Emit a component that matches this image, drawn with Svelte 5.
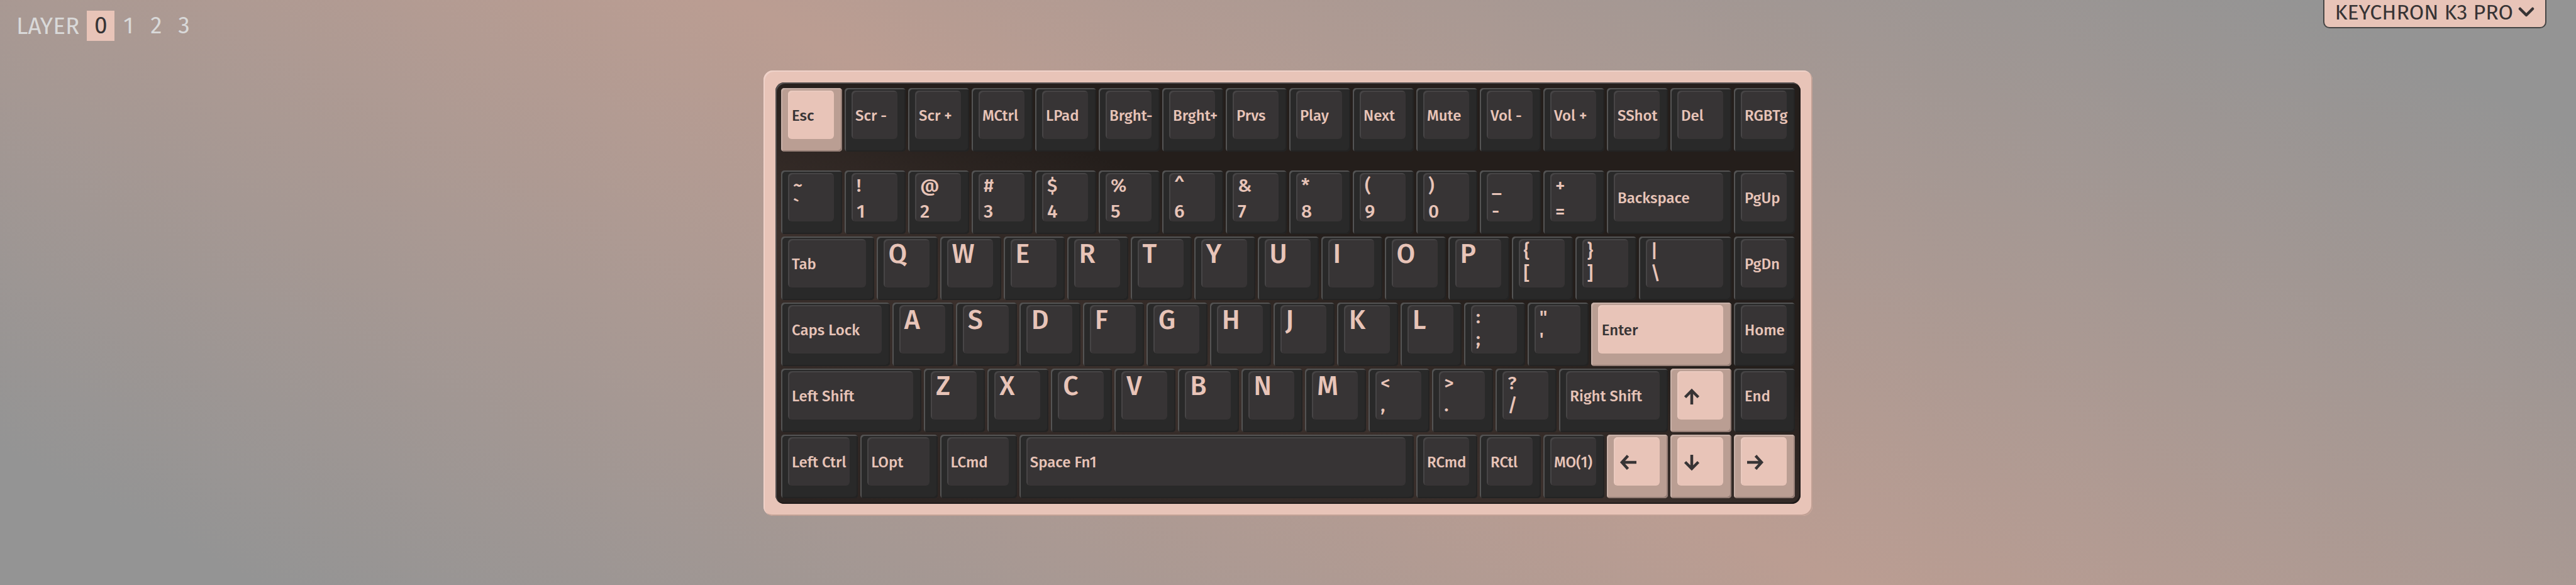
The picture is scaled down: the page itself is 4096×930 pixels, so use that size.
<script>
  const layers = [0, 1, 2, 3];
  let active = $state(0);

  // Each key: legend(s), width in key units, accent flag.
  const k = (label, u = 1, accent = false) => ({ kind: 'text', label, u, accent });
  const s = (top, bottom, u = 1) => ({ kind: 'pair', top, bottom, u });
  const n = (top, bottom) => ({ kind: 'pair wide', top, bottom, u: 1 });
  const c = (label) => ({ kind: 'char', label, u: 1 });
  const a = (label, d) => ({ kind: 'arrow', label, d, u: 1, accent: true });
  const chars = (text) => [...text].map(c);

  const rows = [
    [k('Esc', 1, true), ...['Scr -', 'Scr +', 'MCtrl', 'LPad', 'Brght-', 'Brght+', 'Prvs', 'Play', 'Next', 'Mute', 'Vol -', 'Vol +', 'SShot', 'Del', 'RGBTg'].map((t) => k(t))],
    [s('~', '`'), n('!', '1'), n('@', '2'), n('#', '3'), n('$', '4'), n('%', '5'), n('^', '6'), n('&', '7'), n('*', '8'), n('(', '9'), n(')', '0'), n('_', '-'), n('+', '='), k('Backspace', 2), k('PgUp')],
    [k('Tab', 1.5), ...chars('QWERTYUIOP'), s('{', '['), s('}', ']'), s('|', '\\', 1.5), k('PgDn')],
    [k('Caps Lock', 1.75), ...chars('ASDFGHJKL'), s(':', ';'), s('"', "'"), k('Enter', 2.25, true), k('Home')],
    [k('Left Shift', 2.25), ...chars('ZXCVBNM'), s('<', ','), s('>', '.'), s('?', '/'), k('Right Shift', 1.75), a('Up', 'M14 27V5M3.5 15.5L14 5L24.5 15.5'), k('End')],
    [k('Left Ctrl', 1.25), k('LOpt', 1.25), k('LCmd', 1.25), k('Space Fn1', 6.25), k('RCmd'), k('RCtl'), k('MO(1)'), a('Left', 'M27 14H4M13.5 3.5L4 14L13.5 24.5'), a('Down', 'M14 2V24M3.5 13.5L14 24L24.5 13.5'), a('Right', 'M1 14H24M14.5 3.5L24 14L14.5 24.5')]
  ];
</script>

<div class="page">
  <header>
    <nav aria-label="Layers">
      <span class="title">LAYER</span>
      {#each layers as layer}
        <button type="button" class="layer" class:on={active === layer} onclick={() => (active = layer)}>{layer}</button>
      {/each}
    </nav>
    <button type="button" class="device">
      KEYCHRON K3 PRO
      <svg viewBox="0 0 26 16" aria-hidden="true"><path d="M3 3L13 13L23 3" /></svg>
    </button>
  </header>

  <main>
    <div class="case">
      <div class="plate">
        {#each rows as row, i}
          <div class="row" class:fn={i === 0}>
            {#each row as key}
              <button type="button" class="key" class:accent={key.accent} aria-label={key.kind === 'arrow' ? key.label : undefined} style="grid-column: span {key.u * 4}">
                <span class="cap {key.kind}">
                  {#if key.top}
                    <span>{key.top}</span><span>{key.bottom}</span>
                  {:else if key.kind === 'arrow'}
                    <svg viewBox="0 0 28 28" aria-hidden="true"><path d={key.d} /></svg>
                  {:else}
                    <span>{key.label}</span>
                  {/if}
                </span>
              </button>
            {/each}
          </div>
        {/each}
      </div>
    </div>
  </main>
</div>

<style>
  :global(body) {
    margin: 0;
  }
  .page {
    min-height: 100vh;
    box-sizing: border-box;
    display: flex;
    flex-direction: column;
    background: linear-gradient(28deg, #949494 7%, #bb9d92 50%, #949494 93%);
    font-family: 'Fira Sans', 'Noto Sans', sans-serif;
    color: #373435;
  }
  button {
    font: inherit;
    color: inherit;
    border: 0;
    margin: 0;
    padding: 0;
    background: none;
    cursor: pointer;
  }
  header {
    display: flex;
    justify-content: space-between;
    align-items: flex-start;
    height: 112px;
  }
  nav {
    display: flex;
    align-items: center;
    padding: 17px 0 0 26px;
    color: #d9d9d9;
    font-size: 37px;
  }
  .title {
    margin-right: 12px;
  }
  .layer {
    width: 44px;
    height: 48px;
    line-height: 48px;
  }
  .layer.on {
    background: #e8c4b8;
    color: #373435;
  }
  .device {
    display: flex;
    align-items: center;
    gap: 8px;
    height: 45px;
    box-sizing: border-box;
    margin-right: 47px;
    padding: 0 17px 3px;
    font-size: 34px;
    line-height: 40px;
    background: #e8c4b8;
    border: solid #454545;
    border-width: 0 2px 2px;
    border-radius: 0 0 10px 10px;
  }
  .device svg {
    width: 26px;
    height: 16px;
    margin-bottom: 3px;
  }
  path {
    fill: none;
    stroke: currentColor;
    stroke-width: 4.5;
  }
  .device path {
    stroke-linecap: round;
    stroke-linejoin: round;
  }
  .case {
    width: 100%;
    max-width: 1668px;
    box-sizing: border-box;
    margin: 0 auto;
    padding: 19px;
    border-radius: 15px;
    background: #e8c4b8;
    box-shadow: inset 2px 2px #efd2c9, inset -2px -2px #c2a195;
  }
  .plate {
    padding: 9px;
    border-radius: 14px;
    background: linear-gradient(18deg, #2a2321 0%, #3b302c 36%, #241e1b 60%);
    box-shadow: inset 2px 2px #555050, inset -2px -2px #1f1a19;
  }
  .row {
    display: grid;
    grid-template-columns: repeat(64, minmax(0, 1fr));
    column-gap: 4px;
    margin-top: 4px;
  }
  .row.fn {
    margin: 0 0 30px;
  }
  .fn + .row {
    margin-top: 0;
  }
  .key {
    height: 101px;
    display: flex;
    padding: 4px 13px 20px 11px;
    border-radius: 5px;
    background: #292929;
    color: #e8c4b8;
    text-align: left;
    box-shadow: inset 2px 2px #545454, inset -2px -2px #232323;
  }
  .key.accent {
    background: #ba9e93;
    color: #373435;
    box-shadow: inset 2px 2px #c8b1a8, inset -2px -2px #957e76;
  }
  .cap {
    flex: 1;
    min-width: 0;
    height: 77px;
    box-sizing: border-box;
    display: flex;
    flex-direction: column;
    justify-content: center;
    padding: 3px 0 0 6px;
    border-radius: 6px;
    background: #373435;
    box-shadow: inset 2px 2px #474546;
    font-size: 24px;
    font-weight: 500;
    line-height: 28px;
    white-space: nowrap;
  }
  .accent .cap {
    background: #e8c4b8;
    box-shadow: inset 2px 2px #eacabf;
  }
  .cap.char {
    justify-content: flex-start;
    padding: 2px 0 0 8px;
    font-size: 43px;
    line-height: 44px;
  }
  .cap.pair {
    justify-content: flex-start;
    padding: 2px 0 0 8px;
    font-size: 30px;
    line-height: 35px;
  }
  .cap.pair.wide {
    padding-top: 0;
    line-height: 41px;
  }
  .cap svg {
    width: 28px;
    height: 28px;
    margin-left: 3px;
  }
</style>
